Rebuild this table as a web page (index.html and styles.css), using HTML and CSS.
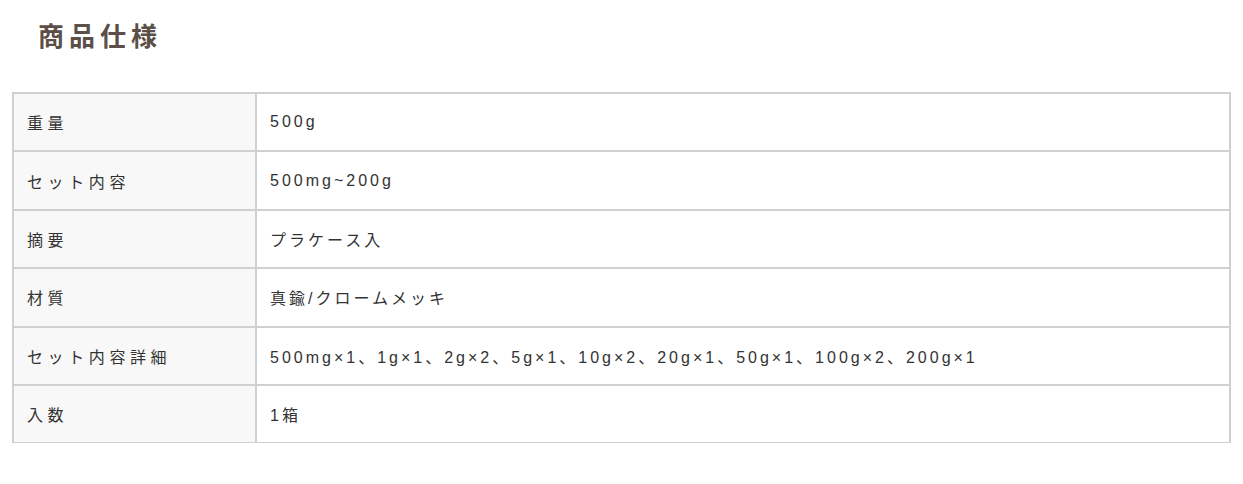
FILE: index.html
```html
<!DOCTYPE html>
<html lang="ja">
<head>
<meta charset="utf-8">
<title>商品仕様</title>
<link rel="stylesheet" href="styles.css">
</head>
<body>
<section class="spec">
  <h2 class="spec-title">商品仕様</h2>
  <table class="spec-table">
    <tbody>
      <tr><th>重量</th><td>500g</td></tr>
      <tr><th>セット内容</th><td>500mg~200g</td></tr>
      <tr><th>摘要</th><td>プラケース入</td></tr>
      <tr><th>材質</th><td>真鍮/クロームメッキ</td></tr>
      <tr><th>セット内容詳細</th><td>500mg×1、1g×1、2g×2、5g×1、10g×2、20g×1、50g×1、100g×2、200g×1</td></tr>
      <tr><th>入数</th><td>1箱</td></tr>
    </tbody>
  </table>
</section>
</body>
</html>
```
FILE: styles.css
```css
html, body {
  margin: 0;
  padding: 0;
  background: #fff;
}
body {
  font-family: "Liberation Sans", Arial, "Noto Sans CJK JP", sans-serif;
  color: #333;
}
.spec {
  padding: 20px 12px 0 12px;
}
.spec-title {
  margin: 0 0 38px 26px;
  font-size: 26px;
  line-height: 34px;
  font-weight: bold;
  letter-spacing: 5px;
  color: #5b4f47;
}
.spec-table {
  width: 1219px;
  border-collapse: collapse;
  font-size: 16px;
  letter-spacing: 3px;
}
.spec-table th,
.spec-table td {
  border: 2px solid #d0d0d0;
  height: 56.4px;
  padding: 0 13px;
  text-align: left;
  vertical-align: middle;
  font-weight: normal;
  color: #333;
}
.spec-table th {
  width: 215px;
  background: #f8f8f8;
  letter-spacing: 4.6px;
}
.spec-table tr:last-child th,
.spec-table tr:last-child td {
  border-bottom-width: 1px;
}
```
